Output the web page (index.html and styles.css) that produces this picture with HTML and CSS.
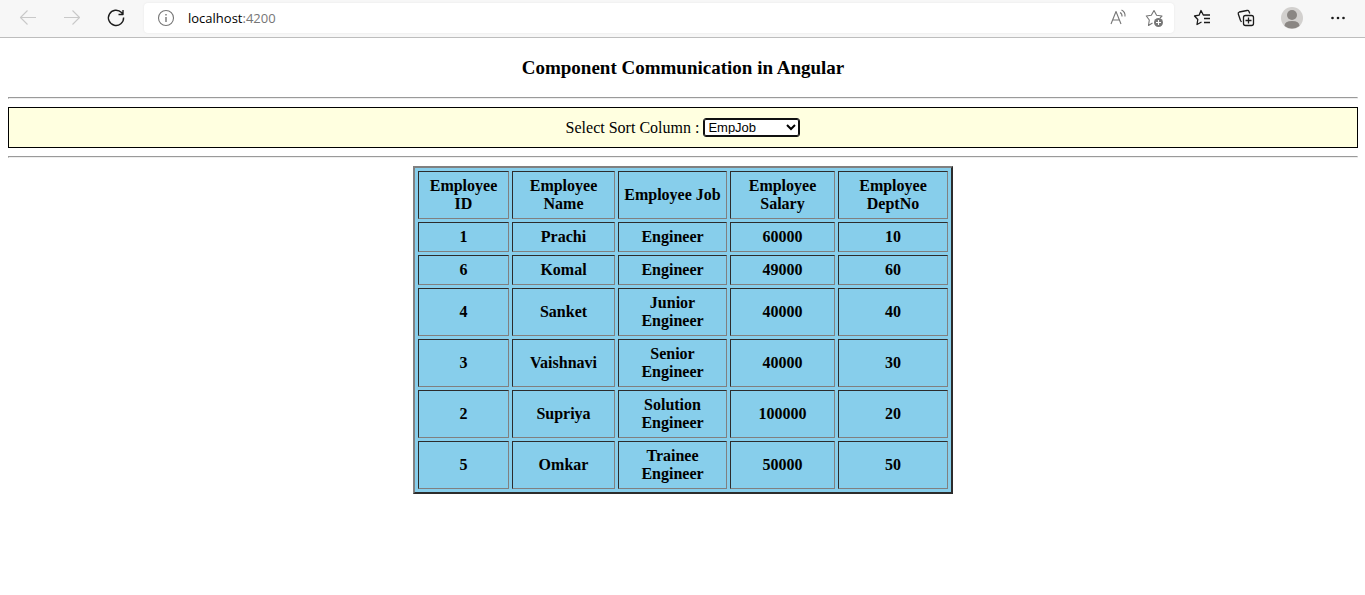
FILE: index.html
```
<!DOCTYPE html>
<html lang="en">
<head>
<meta charset="utf-8">
<meta name="viewport" content="width=device-width, initial-scale=1">
<title>Component Communication in Angular</title>
<link rel="stylesheet" href="styles.css">
</head>
<body>
<header class="toolbar">
  <nav class="history" aria-label="History">
    <button class="icon-button disabled" type="button" aria-label="Back" disabled><svg width="20" height="20" viewBox="0 0 20 20"><path d="M18 9.500H2.500M9.500 2.500l-7 7 7 7"/></svg></button>
    <button class="icon-button disabled" type="button" aria-label="Forward" disabled><svg width="20" height="20" viewBox="0 0 20 20"><path d="M2 9.500h15.500M10.500 2.500l7 7-7 7"/></svg></button>
    <button class="icon-button" type="button" aria-label="Refresh"><svg width="20" height="20" viewBox="0 0 20 20"><path class="strong" d="M17.600 9.500A7.600 7.600 0 1 1 15.500 4.600l1.500 1.600M17 2v4.500h-4.500"/></svg></button>
  </nav>
  <div class="address">
    <button class="icon-button muted" type="button" aria-label="Site information"><svg width="20" height="20" viewBox="0 0 20 20"><circle cx="10" cy="10" r="7.500"/><path class="strong" d="M10 9v5M10 6v1.500"/></svg></button>
    <div class="url">localhost<span class="port">:4200</span></div>
    <button class="icon-button muted" type="button" aria-label="Read aloud"><svg width="20" height="20" viewBox="0 0 20 20"><path d="M3 16 8 3.500l5 12.500M4.800 12h6.400M12 4.500a4 4 0 0 1 2 4M13.500 2a6.500 6.500 0 0 1 3.500 6.500"/></svg></button>
    <button class="icon-button muted" type="button" aria-label="Add to favorites"><svg width="20" height="20" viewBox="0 0 20 20"><path d="m8.500 15-4 2.500.8-5.500-3-4 5-.8L10 2.500l2.600 4.700 5.400.8-2 2"/><circle class="solid" cx="14.500" cy="14.500" r="4.500"/><path class="light" d="M14.500 12v5M12 14.500h5"/></svg></button>
  </div>
  <nav class="tools" aria-label="Browser tools">
    <button class="icon-button" type="button" aria-label="Favorites"><svg width="20" height="20" viewBox="0 0 20 20"><path class="bold" d="m9.500 14-4.500 2.500.8-5L2.500 8l4.600-.8L9 2.500l2.300 4.500H18M12 10.500h6M12 14.500h6"/></svg></button>
    <button class="icon-button" type="button" aria-label="Collections"><svg width="20" height="20" viewBox="0 0 20 20"><path class="bold" d="M5.500 14 4.500 12.500 2.300 6Q1.800 4.500 3.300 4L11 2.500q1.500-.3 2 1l.8 2"/><rect class="bold" x="7.500" y="7.500" width="10" height="10" rx="2"/><path class="bold" d="M12.500 9.500v6M9.500 12.500h6"/></svg></button>
    <button class="icon-button avatar" type="button" aria-label="Profile"><svg width="24" height="24" viewBox="0 0 24 24"><circle class="face" cx="12" cy="12" r="11"/><circle class="person" cx="12" cy="9" r="5"/><path class="person" d="M4.500 20q0-5 7.500-5t7.500 5Q12 25 4.500 20Z"/></svg></button>
    <button class="icon-button" type="button" aria-label="More"><svg width="20" height="20" viewBox="0 0 20 20"><g class="dots"><circle cx="4.500" cy="10" r="1.300"/><circle cx="10" cy="10" r="1.300"/><circle cx="15.500" cy="10" r="1.300"/></g></svg></button>
  </nav>
</header>
<main class="page">
  <h3 class="title">Component Communication in Angular</h3>
  <hr class="rule">
  <div class="sort-bar">
    <label for="sort">Select Sort Column :</label>
    <select class="sort-select" id="sort">
      <option>EmpId</option>
      <option>EmpName</option>
      <option selected>EmpJob</option>
      <option>EmpSalary</option>
      <option>DeptNo</option>
    </select>
  </div>
  <hr class="rule">
  <table class="employees">
    <thead>
      <tr><th class="id">Employee ID</th><th class="name">Employee Name</th><th class="job">Employee Job</th><th class="salary">Employee Salary</th><th class="dept">Employee DeptNo</th></tr>
    </thead>
    <tbody>
      <tr><td>1</td><td>Prachi</td><td>Engineer</td><td>60000</td><td>10</td></tr>
      <tr><td>6</td><td>Komal</td><td>Engineer</td><td>49000</td><td>60</td></tr>
      <tr><td>4</td><td>Sanket</td><td>Junior Engineer</td><td>40000</td><td>40</td></tr>
      <tr><td>3</td><td>Vaishnavi</td><td>Senior Engineer</td><td>40000</td><td>30</td></tr>
      <tr><td>2</td><td>Supriya</td><td>Solution Engineer</td><td>100000</td><td>20</td></tr>
      <tr><td>5</td><td>Omkar</td><td>Trainee Engineer</td><td>50000</td><td>50</td></tr>
    </tbody>
  </table>
</main>
</body>
</html>
```
FILE: styles.css
```
* { box-sizing: border-box; }

body {
  margin: 0;
  background: #fff;
  color: #000;
  font: 16px/18px "Liberation Serif", "Times New Roman", serif;
}

/* Browser toolbar */
.toolbar {
  display: flex;
  align-items: center;
  padding: 3px 17px 4px 18px;
  background: #f7f7f7;
  border-bottom: 1px solid #bdbdbd;
}

.history { display: flex; gap: 24px; }
.tools { display: flex; align-items: center; gap: 24px; margin-left: 18px; }

.icon-button {
  display: flex;
  flex: none;
  width: 20px;
  height: 20px;
  padding: 0;
  border: 0;
  background: none;
  color: #1b1b1b;
}
.icon-button.disabled { color: #c9c9c9; }
.icon-button.muted { color: #767676; }

.icon-button svg {
  fill: none;
  stroke: currentColor;
  stroke-width: 1.1;
  stroke-linejoin: round;
}
.icon-button .bold { stroke-width: 1.3; }
.icon-button .strong { stroke-width: 1.4; }
.icon-button .solid { fill: currentColor; stroke: none; }
.icon-button .light { stroke: #fff; }
.icon-button .dots { fill: currentColor; stroke: none; }

.icon-button.avatar { width: 24px; height: 24px; }
.avatar .face { fill: #d2d0ce; stroke: none; }
.avatar .person { fill: #8a8683; stroke: none; }

.address {
  display: flex;
  flex: 1;
  align-items: center;
  gap: 16px;
  height: 30px;
  margin-left: 18px;
  padding: 0 10px 0 12px;
  border-radius: 4px;
  background: #fff;
  box-shadow: 0 0 2px #e4e4e4;
}

.url {
  flex: 1;
  margin-left: -4px;
  font: 13px/20px "Open Sans", "Noto Sans", sans-serif;
}
.port { color: #767676; }

/* Page content */
.page { padding: 0 7px 0 8px; }

.title {
  margin: 0;
  padding: 19px 0 18px;
  font-size: 19px;
  line-height: 22px;
  text-align: center;
}

.rule {
  margin: 0;
  border: 1px solid;
  border-color: #9a9a9a #eee #eee #9a9a9a;
}

.sort-bar {
  display: flex;
  align-items: center;
  justify-content: center;
  gap: 4px;
  margin: 8px 0;
  padding: 10px;
  border: 1px solid #000;
  background: #ffffe0;
}

.sort-select {
  width: 97px;
  height: 19px;
  padding: 0 1px 2px 0;
  border: 1px solid #101010;
  border-radius: 3px;
  box-shadow: inset 0 0 0 1px #101010;
  background: #fff;
  color: #000;
  font: 13px "Liberation Sans", Arial, sans-serif;
}

.employees {
  width: 40%;
  margin: 8px auto 0;
  border: 2px solid;
  border-color: #808080 #2c2c2c #2c2c2c #808080;
  border-spacing: 3px;
  background: skyblue;
  font-weight: bold;
  text-align: center;
}

.employees th,
.employees td {
  padding: 5px;
  border: 1px solid;
  border-color: #2c2c2c #808080 #808080 #2c2c2c;
}

.id { width: 91px; }
.name { width: 103px; }
.job { width: 109px; }
.salary { width: 105px; }
.dept { width: 110px; }
```
